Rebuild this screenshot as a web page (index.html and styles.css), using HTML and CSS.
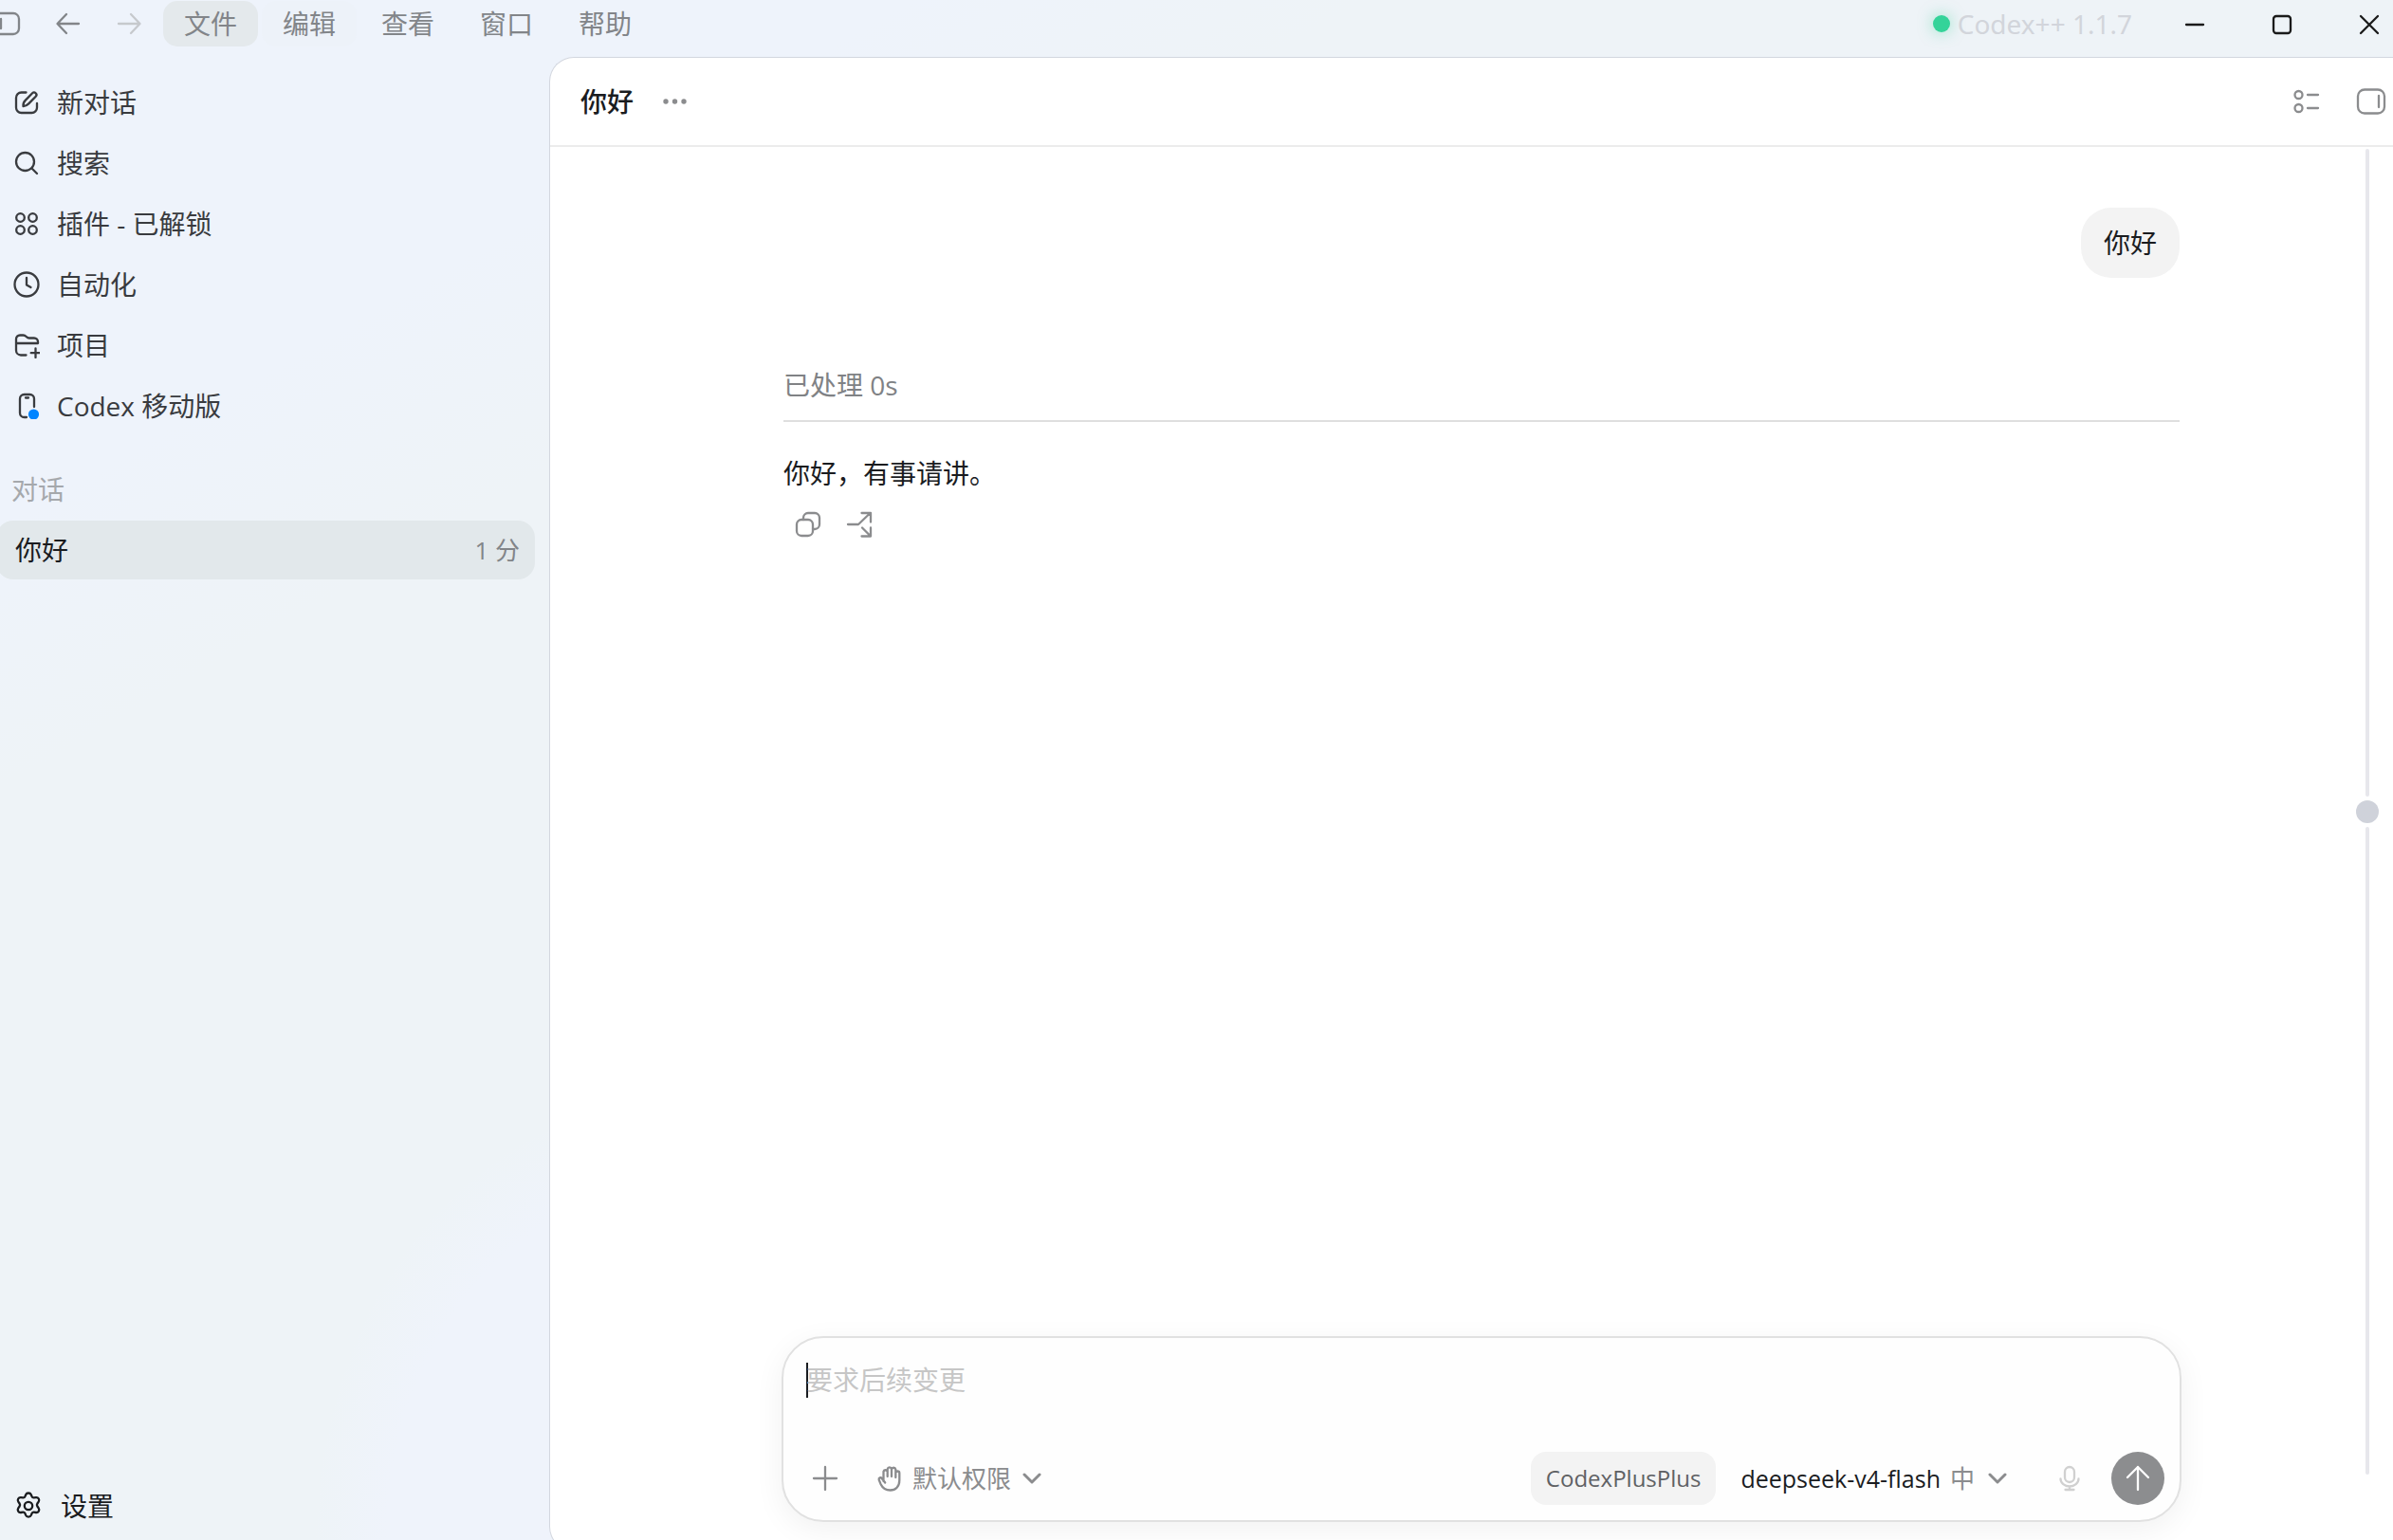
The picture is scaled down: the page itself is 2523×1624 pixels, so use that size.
FILE: index.html
```html
<!DOCTYPE html>
<html lang="zh-CN">
<head>
<meta charset="utf-8">
<meta name="viewport" content="width=device-width, initial-scale=1">
<title>你好 - Codex</title>
<link rel="stylesheet" href="styles.css">
</head>
<body>
<div class="app">
  <header class="titlebar">
    <div class="nav-tools">
      <button class="tool" type="button" aria-label="切换边栏">
        <svg class="icon" width="32" height="32" viewBox="0 0 32 32"><rect x="0" y="5" width="29" height="22" rx="6"/><path d="M10 11v10"/></svg>
      </button>
      <button class="tool" type="button" aria-label="后退">
        <svg class="icon" width="32" height="32" viewBox="0 0 32 32"><path d="M28 16H6M15 6L5.500 16L15 26"/></svg>
      </button>
      <button class="tool tool-off" type="button" aria-label="前进">
        <svg class="icon" width="32" height="32" viewBox="0 0 32 32"><path d="M6 16h22M19 6l9.500 10L19 26"/></svg>
      </button>
    </div>
    <nav class="menubar">
      <button class="menu menu-active" type="button">文件</button>
      <button class="menu menu-soft" type="button">编辑</button>
      <button class="menu" type="button">查看</button>
      <button class="menu" type="button">窗口</button>
      <button class="menu" type="button">帮助</button>
    </nav>
    <div class="status"><span class="status-dot"></span>Codex++ 1.1.7</div>
    <div class="window-controls">
      <button class="wc" type="button" aria-label="最小化"><svg class="icon" width="24" height="24" viewBox="0 0 24 24"><path d="M3 12h18"/></svg></button>
      <button class="wc" type="button" aria-label="最大化"><svg class="icon" width="24" height="24" viewBox="0 0 24 24"><rect x="3" y="3" width="18" height="18" rx="3"/></svg></button>
      <button class="wc" type="button" aria-label="关闭"><svg class="icon" width="24" height="24" viewBox="0 0 24 24"><path d="M3 3l18 18M21 3L3 21"/></svg></button>
    </div>
  </header>

  <div class="body">
    <aside class="sidebar">
      <nav class="side-nav">
        <a class="side-link" href="#new"><svg class="icon" width="28" height="28" viewBox="0 0 28 28"><path d="M13.500 3.500H8.500A5.500 5.500 0 0 0 3 9v10.500A5.500 5.500 0 0 0 8.500 25h11a5.500 5.500 0 0 0 5.500-5.500V15"/><path d="M10.500 18.200c-.3-2.600.6-4.700 2.200-6.300l7.400-7.600a2.500 2.500 0 0 1 3.600 3.500l-7.500 7.600c-1.600 1.600-3.400 2.500-5.700 2.800z"/></svg>新对话</a>
        <a class="side-link" href="#search"><svg class="icon" width="28" height="28" viewBox="0 0 28 28"><circle cx="12.500" cy="12.500" r="9.500"/><path d="M19.500 19.500l5.500 5.500"/></svg>搜索</a>
        <a class="side-link" href="#plugins"><svg class="icon" width="28" height="28" viewBox="0 0 28 28"><circle cx="7.500" cy="7.500" r="4.300"/><circle cx="20.500" cy="7.500" r="4.300"/><circle cx="7.500" cy="20.500" r="4.300"/><circle cx="20.500" cy="20.500" r="4.300"/></svg>插件 - 已解锁</a>
        <a class="side-link" href="#automation"><svg class="icon" width="28" height="28" viewBox="0 0 28 28"><circle cx="14" cy="14" r="12.500"/><path d="M14 7v7.500l4.500 2.500"/></svg>自动化</a>
        <a class="side-link" href="#projects"><svg class="icon" width="28" height="28" viewBox="0 0 28 28"><path d="M13.500 24.500H8a5 5 0 0 1-5-5V7.500a4 4 0 0 1 4-4h3.500c1.500 0 2.300.6 3.200 1.500.9.900 1.500 1.500 3 1.500H22a4 4 0 0 1 4 4V12H3M23.500 17.500v9.500M18.700 22.200h9.300"/></svg>项目</a>
        <a class="side-link" href="#mobile"><svg class="icon" width="28" height="28" viewBox="0 0 28 28"><path d="M14 26h-2.500A4.500 4.500 0 0 1 7 21.500v-15A4.500 4.500 0 0 1 11.500 2h6A4.500 4.500 0 0 1 22 6.500V15M13 5.500h3"/><circle class="badge-fill" cx="21.500" cy="23" r="5.600"/></svg>Codex 移动版</a>
      </nav>
      <h2 class="side-heading">对话</h2>
      <a class="thread" href="#thread"><span>你好</span><time class="thread-age">1 分</time></a>
      <a class="settings" href="#settings"><svg class="icon" width="32" height="32" viewBox="0 0 32 32"><circle cx="16" cy="16" r="4.200"/><path d="M13.200 4.200c1-2.300 4.600-2.300 5.600 0l.8 1.900c.4.900 1.200 1.300 2.200 1.200l2.200-.2c2.500-.2 4.100 2.500 2.700 4.500l-1.300 1.900c-.6.900-.6 2.100 0 3l1.300 1.900c1.400 2.100-.2 4.800-2.700 4.600l-2.200-.3c-1-.1-1.800.4-2.200 1.200l-.8 2c-1 2.300-4.600 2.300-5.600 0l-.8-2c-.4-.8-1.200-1.300-2.200-1.200l-2.200.3c-2.500.2-4.100-2.500-2.700-4.600l1.300-1.900c.6-.9.600-2.100 0-3l-1.300-1.900c-1.400-2 .2-4.700 2.700-4.500l2.200.2c1 .1 1.800-.3 2.200-1.200z"/></svg>设置</a>
    </aside>

    <main class="panel">
      <header class="panel-head">
        <h1 class="panel-title">你好</h1>
        <button class="more" type="button" aria-label="更多"><svg width="28" height="28" viewBox="0 0 28 28" fill="currentColor"><circle cx="5" cy="14" r="2.700"/><circle cx="14.500" cy="14" r="2.700"/><circle cx="24" cy="14" r="2.700"/></svg></button>
        <div class="head-tools">
          <button class="tool" type="button" aria-label="摘要"><svg class="icon" width="32" height="32" viewBox="0 0 32 32"><circle cx="7.500" cy="9" r="4"/><circle cx="7.500" cy="23" r="4"/><path d="M17 9h11M17 23h11"/></svg></button>
          <button class="tool" type="button" aria-label="切换侧面板"><svg class="icon" width="32" height="32" viewBox="0 0 32 32"><rect x="2" y="3.500" width="28" height="25" rx="7"/><path d="M24 10v12"/></svg></button>
        </div>
      </header>

      <div class="chat">
        <div class="column">
          <p class="bubble">你好</p>
          <p class="elapsed">已处理 0s</p>
          <p class="reply">你好，有事请讲。</p>
          <div class="actions">
            <button class="act" type="button" aria-label="复制"><svg class="icon" width="28" height="28" viewBox="0 0 28 28"><rect x="2" y="9" width="17" height="17" rx="5"/><path d="M9 9V7a5 5 0 0 1 5-5h7a5 5 0 0 1 5 5v7a5 5 0 0 1-5 5h-2"/></svg></button>
            <button class="act" type="button" aria-label="分叉"><svg class="icon" width="28" height="28" viewBox="0 0 28 28"><path d="M2 14h11L25 2.500M16.500 2H26v9.500M17 17.500l8.500 8.500M26 17.500V26.500H16.500"/></svg></button>
          </div>
        </div>

        <form class="composer">
          <label class="entry"><span class="caret"></span><input class="prompt" type="text" placeholder="要求后续变更" aria-label="消息"></label>
          <div class="controls">
            <button class="ctl add" type="button" aria-label="添加"><svg class="icon" width="28" height="28" viewBox="0 0 28 28"><path d="M14 2v24M2 14h24"/></svg></button>
            <button class="ctl" type="button"><svg class="icon" width="28" height="28" viewBox="0 0 28 28"><path d="M7.500 17V6.800a2.200 2.200 0 0 1 4.200 0V12M11.700 12V4.200a2.200 2.200 0 0 1 4.300 0V12M16 12V4.500a2.200 2.200 0 0 1 4.300 0V13M20.300 13V8.500a2 2 0 0 1 4 0V16c0 6.500-4 10.500-9.600 10.500-5 0-8.200-2.400-10.200-6.600L2.700 15.500c-.5-2.200 2-2.900 3-1.500l3.500 4.500"/></svg>默认权限<svg class="icon chev" width="20" height="20" viewBox="0 0 20 20"><path d="M2 6l8 8 8-8"/></svg></button>
            <button class="chip" type="button">CodexPlusPlus</button>
            <button class="ctl model" type="button"><span class="model-name">deepseek-v4-flash</span>中<svg class="icon chev" width="20" height="20" viewBox="0 0 20 20"><path d="M2 6l8 8 8-8"/></svg></button>
            <button class="ctl mic" type="button" aria-label="语音输入"><svg class="icon" width="28" height="28" viewBox="0 0 28 28"><rect x="9" y="2" width="10" height="16" rx="5"/><path d="M4.500 14.500a9.500 8 0 0 0 19 0M14 22.500V26M9.500 26h9"/></svg></button>
            <button class="send" type="submit" aria-label="发送"><svg class="icon" width="32" height="32" viewBox="0 0 32 32"><path d="M16 28V4M5 15L16 4l11 11"/></svg></button>
          </div>
        </form>

        <div class="rail"><span class="rail-line"></span><span class="rail-dot"></span><span class="rail-line"></span></div>
      </div>
    </main>
  </div>
</div>
</body>
</html>
```
FILE: styles.css
```css
* {
  box-sizing: border-box;
}

body {
  margin: 0;
  font-family: "Open Sans", "Noto Sans CJK SC", sans-serif;
  font-size: 28px;
  line-height: 40px;
  color: #1a1c1f;
}

button,
input {
  font: inherit;
  color: inherit;
  background: none;
  border: 0;
  padding: 0;
  margin: 0;
}

a {
  color: inherit;
  text-decoration: none;
}

h1,
h2,
p {
  margin: 0;
  font-size: inherit;
  font-weight: 400;
}

.icon {
  fill: none;
  stroke: currentColor;
  stroke-width: 2.3;
  stroke-linecap: round;
  stroke-linejoin: round;
  flex: none;
}

button svg,
a svg {
  display: block;
}

.app {
  height: 100vh;
  display: flex;
  flex-direction: column;
  overflow: hidden;
  background:
    radial-gradient(ellipse 390px 470px at 720px 100%, #eff3fb 0%, #eff3fb 80%, rgba(239, 243, 251, 0) 100%),
    linear-gradient(150deg, #eef3fb 0%, #eef3fb 18%, #eef3f7 27%, #eef3f7 100%);
}

/* Title bar */
.titlebar {
  height: 60px;
  flex: none;
  display: flex;
  align-items: flex-start;
  padding-right: 13px;
}

.nav-tools {
  display: flex;
  gap: 32px;
  height: 50px;
  align-items: center;
  margin-left: -9px;
  color: #828589;
}

.tool-off {
  color: #c6c9cd;
}

.menubar {
  display: flex;
  gap: 4px;
  padding-top: 1px;
  margin-left: 21px;
}

.menu {
  height: 48px;
  padding: 0 22px;
  border-radius: 15px;
  color: #828589;
}

.menu-active {
  background: #e4e9ec;
}

.menu-soft {
  background: #edf2f9;
}

.status {
  margin-left: auto;
  height: 50px;
  display: flex;
  align-items: center;
  gap: 8px;
  font-family: "Noto Sans", sans-serif;
  color: #d2d5db;
}

.status-dot {
  width: 18px;
  height: 18px;
  border-radius: 50%;
  background: #34d399;
  box-shadow: 0 0 16px rgba(52, 211, 153, 0.5);
}

.window-controls {
  display: flex;
  gap: 68px;
  height: 52px;
  align-items: center;
  margin-left: 54px;
  color: #1a1a1a;
}

.body {
  flex: 1;
  min-height: 0;
  display: flex;
}

/* Sidebar */
.sidebar {
  width: 579px;
  flex: none;
  display: flex;
  flex-direction: column;
  padding: 16px 15px 4px 0;
}

.side-link {
  height: 64px;
  display: flex;
  align-items: center;
  gap: 18px;
  padding-left: 14px;
  color: #393b3f;
}

.badge-fill {
  fill: #0285ff;
  stroke: none;
}

.side-heading {
  padding: 36px 0 12px 12px;
  color: #a5a8ac;
}

.thread {
  height: 62px;
  display: flex;
  align-items: center;
  justify-content: space-between;
  padding: 0 16px 0 20px;
  margin: 1px 0 0 -4px;
  border-radius: 18px;
  background: #e2e8eb;
}

.thread-age {
  font-size: 26px;
  color: #828589;
}

.settings {
  height: 64px;
  display: flex;
  align-items: center;
  gap: 18px;
  padding-left: 14px;
  margin-top: auto;
}

/* Conversation panel */
.panel {
  flex: 1;
  min-width: 0;
  display: flex;
  flex-direction: column;
  margin-bottom: -12px;
  background: #fff;
  border: 1px solid #d3d7df;
  border-right: 0;
  border-radius: 26px 0 0 26px;
}

.panel-head {
  height: 94px;
  flex: none;
  display: flex;
  align-items: center;
  padding: 0 7px 0 32px;
  border-bottom: 2px solid #ececec;
}

.panel-title {
  font-weight: 500;
}

.more {
  margin-left: 29px;
  color: #8b8c8e;
}

.head-tools {
  margin-left: auto;
  display: flex;
  gap: 36px;
  color: #8b8c8e;
}

.chat {
  flex: 1;
  position: relative;
  display: flex;
  flex-direction: column;
  align-items: center;
  padding: 64px 0 30px 21px;
}

.column {
  width: 100%;
  max-width: 1472px;
  flex: 1;
  display: flex;
  flex-direction: column;
}

.bubble {
  align-self: flex-end;
  padding: 17px 24px;
  border-radius: 32px;
  background: #f3f3f3;
}

.elapsed {
  margin-top: 93px;
  padding-bottom: 17px;
  border-bottom: 2px solid #dfdfdf;
  color: #808285;
}

.reply {
  margin-top: 34px;
}

.actions {
  display: flex;
  gap: 26px;
  padding: 20px 0 0 12px;
  color: #8b8c8e;
}

.composer {
  width: 100%;
  max-width: 1476px;
  padding: 25px 16px 16px 24px;
  border: 2px solid #e1e1e1;
  border-radius: 44px;
  background: #fefefe;
  box-shadow: 0 8px 32px rgba(0, 0, 0, 0.06);
}

.entry {
  display: flex;
  align-items: center;
  height: 38px;
}

.caret {
  width: 2px;
  height: 37px;
  margin-right: -2px;
  background: #1a1c1f;
}

.prompt {
  flex: 1;
  height: 40px;
  outline: none;
}

.prompt::placeholder {
  color: #c6c6c6;
  opacity: 1;
}

.controls {
  display: flex;
  align-items: center;
  height: 56px;
  margin-top: 57px;
  font-size: 26px;
}

.ctl {
  display: flex;
  align-items: center;
  gap: 10px;
  color: #8b8c8e;
}

.add {
  margin: 0 40px 0 6px;
}

.chev {
  margin-left: 2px;
  stroke-width: 3;
}

.chip {
  height: 56px;
  margin-left: auto;
  padding: 0 16px;
  border-radius: 16px;
  background: #f3f3f3;
  font-size: 24px;
  color: #5f6164;
}

.model {
  margin-left: 26px;
}

.model-name {
  font-size: 25px;
  color: #1a1c1f;
}

.model .chev {
  margin-left: 4px;
}

.mic {
  margin-left: 52px;
  color: #d0d0d0;
}

.send {
  width: 56px;
  height: 56px;
  margin-left: 30px;
  display: grid;
  place-items: center;
  border-radius: 50%;
  background: #8c8d8f;
  color: #fff;
}

/* Position rail drawn over the right edge of the conversation */
.rail {
  position: absolute;
  top: 2px;
  right: 15px;
  bottom: 80px;
  width: 24px;
  display: flex;
  flex-direction: column;
  align-items: center;
  gap: 4px;
}

.rail-line {
  flex: 1;
  width: 4px;
  border-radius: 2px;
  background: #e7e7ec;
}

.rail-dot {
  width: 24px;
  height: 24px;
  border-radius: 50%;
  background: #cfd2da;
}
```
